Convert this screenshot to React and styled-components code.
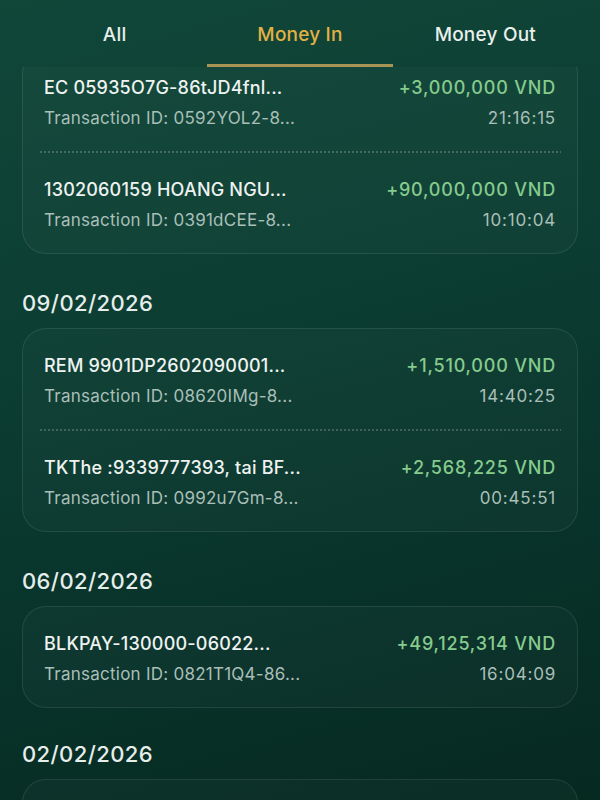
import React from "react";
import styled, { createGlobalStyle } from "styled-components";

const Global = createGlobalStyle`
  html, body { margin: 0; padding: 0; }
  body {
    width: 600px;
    height: 800px;
    overflow: hidden;
    font-family: Inter, "Noto Sans", sans-serif;
    background: #0a3a30;
  }
`;

const Screen = styled.div`
  width: 600px;
  height: 800px;
  display: flex;
  flex-direction: column;
  overflow: hidden;
  background: linear-gradient(165deg, #104739 0%, #0c3d32 40%, #08332a 70%, #062920 100%);
`;

const Tabs = styled.nav`
  display: grid;
  grid-template-columns: repeat(3, 1fr);
  padding: 0 22px;
  flex: none;
`;

const Tab = styled.div`
  height: 67px;
  display: flex;
  align-items: center;
  justify-content: center;
  box-sizing: border-box;
  padding-top: 4px;
  font-size: 19px;
  font-weight: 500;
  letter-spacing: 0.2px;
  color: ${(p) => (p.$active ? "#e3b143" : "#e9efec")};
  border-bottom: 3px solid ${(p) => (p.$active ? "#a89455" : "transparent")};
`;

const List = styled.div`
  flex: 1;
  overflow: hidden;
  padding: 0 22px;
  display: flex;
  flex-direction: column;
`;

const Card = styled.div`
  border: 1px solid rgba(255, 255, 255, 0.09);
  border-radius: 24px;
  background: rgba(255, 255, 255, 0.025);
  display: flex;
  flex-direction: column;
  margin-top: ${(p) => (p.$offset ? `-${p.$offset}px` : "0")};
  min-height: 100px;
  flex: none;
`;

const Row = styled.div`
  padding: 26px 21px 22px;
  display: grid;
  grid-template-columns: 1fr auto;
  row-gap: 8px;
  column-gap: 12px;
`;

const Divider = styled.div`
  margin: 0 16px;
  height: 2px;
  background-image: radial-gradient(circle, rgba(255, 255, 255, 0.2) 0.9px, transparent 1.1px);
  background-size: 4px 2px;
  background-repeat: repeat-x;
`;

const Title = styled.div`
  font-size: 18px;
  line-height: 22px;
  font-weight: 500;
  color: #eef3f1;
  letter-spacing: 0.2px;
  white-space: nowrap;
`;

const Amount = styled.div`
  font-size: 18px;
  line-height: 22px;
  font-weight: 500;
  color: #86cb8d;
  text-align: right;
  letter-spacing: 0.8px;
  white-space: nowrap;
`;

const Sub = styled.div`
  font-size: 17px;
  line-height: 22px;
  font-weight: 400;
  color: #a9bfb8;
  letter-spacing: ${(p) => (p.$right ? "0.8px" : "0.25px")};
  white-space: nowrap;
  text-align: ${(p) => (p.$right ? "right" : "left")};
`;

const DateHeader = styled.div`
  font-size: 22px;
  line-height: 26px;
  font-weight: 500;
  color: #e6eeeb;
  letter-spacing: 0.4px;
  margin: ${(p) => p.$gap ?? 36}px 0 12px;
  flex: none;
`;

const groups = [
  {
    date: null,
    offset: 17,
    items: [
      { title: "EC 05935O7G-86tJD4fnl...", amount: "+3,000,000 VND", id: "Transaction ID: 0592YOL2-8...", time: "21:16:15" },
      { title: "1302060159 HOANG NGU...", amount: "+90,000,000 VND", id: "Transaction ID: 0391dCEE-8...", time: "10:10:04" },
    ],
  },
  {
    date: "09/02/2026",
    items: [
      { title: "REM 9901DP2602090001...", amount: "+1,510,000 VND", id: "Transaction ID: 08620IMg-8...", time: "14:40:25" },
      { title: "TKThe :9339777393, tai BF...", amount: "+2,568,225 VND", id: "Transaction ID: 0992u7Gm-8...", time: "00:45:51" },
    ],
  },
  {
    date: "06/02/2026",
    items: [
      { title: "BLKPAY-130000-06022...", amount: "+49,125,314 VND", id: "Transaction ID: 0821T1Q4-86...", time: "16:04:09" },
    ],
  },
  {
    date: "02/02/2026",
    gap: 33,
    items: [],
  },
];

export default function App() {
  return (
    <>
      <Global />
      <Screen>
        <Tabs>
          <Tab>All</Tab>
          <Tab $active>Money In</Tab>
          <Tab>Money Out</Tab>
        </Tabs>
        <List>
          {groups.map((g, gi) => (
            <React.Fragment key={gi}>
              {g.date && <DateHeader $gap={g.gap}>{g.date}</DateHeader>}
              <Card $offset={g.offset}>
                {g.items.map((it, i) => (
                  <React.Fragment key={i}>
                    {i > 0 && <Divider />}
                    <Row>
                      <Title>{it.title}</Title>
                      <Amount>{it.amount}</Amount>
                      <Sub>{it.id}</Sub>
                      <Sub $right>{it.time}</Sub>
                    </Row>
                  </React.Fragment>
                ))}
              </Card>
            </React.Fragment>
          ))}
        </List>
      </Screen>
    </>
  );
}
